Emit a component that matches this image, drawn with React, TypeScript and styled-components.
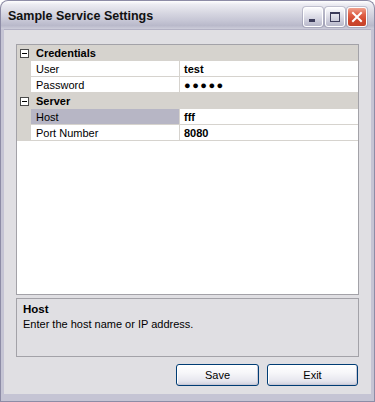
import React from "react";
import styled, { createGlobalStyle } from "styled-components";

const GlobalStyle = createGlobalStyle`
  html, body { margin: 0; padding: 0; background: #ffffff; }
  #root { width: 375px; height: 402px; }
  * { box-sizing: border-box; }
`;

const Window = styled.div`
  width: 375px;
  height: 402px;
  display: flex;
  flex-direction: column;
  font-family: "Liberation Sans", Arial, sans-serif;
  font-size: 11px;
  color: #000;
`;

const TitleBar = styled.div`
  height: 29px;
  flex: none;
  display: flex;
  align-items: center;
  justify-content: space-between;
  padding: 0 7px 0 7px;
  border: 1px solid #8d8ca6;
  border-bottom: none;
  border-radius: 8px 8px 0 0;
  background: linear-gradient(
    180deg,
    #ffffff 0%,
    #ececf2 12%,
    #d9d9e3 40%,
    #c6c6d5 70%,
    #b9b9ca 88%,
    #cdcdda 100%
  );
`;

const Title = styled.span`
  font-family: "Liberation Sans", Arial, sans-serif;
  font-weight: bold;
  font-size: 12.5px;
  color: #111;
  margin-top: 1px;
`;

const Controls = styled.div`
  display: flex;
  gap: 2px;
  margin-top: 3px;
`;

const CtrlButton = styled.div<{ $close?: boolean }>`
  width: 20px;
  height: 20px;
  border: 1px solid #ffffff;
  border-radius: 3px;
  display: flex;
  align-items: center;
  justify-content: center;
  box-shadow: 0 0 0 1px rgba(120, 120, 150, 0.35);
  background: ${(p) =>
    p.$close
      ? "linear-gradient(180deg, #f0a28e 0%, #e0634a 35%, #d0452b 70%, #c4442c 100%)"
      : "linear-gradient(180deg, #fbfbfd 0%, #dedee8 45%, #c6c6d6 80%, #b8b8ca 100%)"};
`;

const Frame = styled.div`
  flex: 1;
  display: flex;
  background: #c5c4d4;
  border: 1px solid #8d8ca6;
  border-top: none;
  padding: 0 3px 7px 3px;
`;

const Client = styled.div`
  flex: 1;
  display: flex;
  flex-direction: column;
  background: #e0dfe3;
  border-top: 1px solid #b3b2c4;
  padding: 14px 12px 8px 12px;
`;

const Grid = styled.div`
  height: 251px;
  flex: none;
  background: #ffffff;
  border: 1px solid #a3a2a8;
  display: flex;
  flex-direction: column;
`;

const CategoryRow = styled.div`
  height: 16px;
  flex: none;
  display: flex;
  align-items: center;
  background: #d6d3ce;
  font-weight: bold;
`;

const Expander = styled.div`
  width: 9px;
  height: 9px;
  margin: 0 7px 0 3px;
  border: 1px solid #4a4a4a;
  background: #ffffff;
  display: flex;
  align-items: center;
  justify-content: center;
  &::after {
    content: "";
    width: 5px;
    height: 1px;
    background: #000;
  }
`;

const PropRow = styled.div`
  height: 16px;
  flex: none;
  display: flex;
`;

const Margin = styled.div`
  width: 14px;
  flex: none;
  background: #d6d3ce;
`;

const NameCell = styled.div<{ $selected?: boolean }>`
  width: 148px;
  flex: none;
  padding-left: 5px;
  display: flex;
  align-items: center;
  border-bottom: 1px solid #d6d3ce;
  background: ${(p) => (p.$selected ? "#b7b6c5" : "#ffffff")};
  white-space: nowrap;
`;

const ValueCell = styled.div`
  flex: 1;
  padding-left: 4px;
  display: flex;
  align-items: center;
  border-left: 1px solid #d6d3ce;
  border-bottom: 1px solid #d6d3ce;
  font-weight: bold;
  white-space: nowrap;
`;

const Dots = styled.span`
  letter-spacing: 1.5px;
  font-size: 11px;
`;

const Description = styled.div`
  height: 59px;
  flex: none;
  margin-top: 3px;
  border: 1px solid #a3a2a8;
  padding: 4px 6px;
  display: flex;
  flex-direction: column;
  line-height: 13px;
`;

const DescTitle = styled.div`
  font-weight: bold;
  font-size: 11.5px;
`;

const DescText = styled.div`
  margin-top: 2px;
`;

const ButtonRow = styled.div`
  margin-top: 7px;
  display: flex;
  justify-content: flex-end;
  gap: 8px;
  padding-right: 1px;
`;

const Button = styled.button<{ $width: number }>`
  width: ${(p) => p.$width}px;
  height: 22px;
  border: 1px solid #003c74;
  border-radius: 3px;
  font-family: "Liberation Sans", Arial, sans-serif;
  font-size: 11px;
  color: #000;
  padding: 0;
  background: linear-gradient(180deg, #ffffff 0%, #f6f6f9 40%, #e6e6ee 80%, #cfcfdc 100%);
  box-shadow: inset -1px -1px 0 #c8c8d6, inset 1px 1px 0 #ffffff;
`;

type Prop = { name: string; value: React.ReactNode; selected?: boolean };
type Category = { title: string; props: Prop[] };

const data: Category[] = [
  {
    title: "Credentials",
    props: [
      { name: "User", value: "test" },
      { name: "Password", value: <Dots>●●●●●</Dots> },
    ],
  },
  {
    title: "Server",
    props: [
      { name: "Host", value: "fff", selected: true },
      { name: "Port Number", value: "8080" },
    ],
  },
];

export default function App() {
  return (
    <>
      <GlobalStyle />
      <Window>
        <TitleBar>
          <Title>Sample Service Settings</Title>
          <Controls>
            <CtrlButton>
              <svg width="14" height="14" viewBox="0 0 14 14">
                <rect x="3" y="9" width="6" height="3" fill="#3c3c5a" />
              </svg>
            </CtrlButton>
            <CtrlButton>
              <svg width="14" height="14" viewBox="0 0 14 14">
                <rect x="2.5" y="2.5" width="9" height="9" fill="none" stroke="#3c3c5a" strokeWidth="1" />
                <rect x="2" y="2" width="10" height="2" fill="#3c3c5a" />
              </svg>
            </CtrlButton>
            <CtrlButton $close>
              <svg width="14" height="14" viewBox="0 0 14 14">
                <path d="M3 3 L11 11 M11 3 L3 11" stroke="#ffffff" strokeWidth="2" strokeLinecap="square" />
              </svg>
            </CtrlButton>
          </Controls>
        </TitleBar>
        <Frame>
          <Client>
            <Grid>
              {data.map((cat) => (
                <React.Fragment key={cat.title}>
                  <CategoryRow>
                    <Expander />
                    {cat.title}
                  </CategoryRow>
                  {cat.props.map((p) => (
                    <PropRow key={p.name}>
                      <Margin />
                      <NameCell $selected={p.selected}>{p.name}</NameCell>
                      <ValueCell>{p.value}</ValueCell>
                    </PropRow>
                  ))}
                </React.Fragment>
              ))}
            </Grid>
            <Description>
              <DescTitle>Host</DescTitle>
              <DescText>Enter the host name or IP address.</DescText>
            </Description>
            <ButtonRow>
              <Button $width={83}>Save</Button>
              <Button $width={91}>Exit</Button>
            </ButtonRow>
          </Client>
        </Frame>
      </Window>
    </>
  );
}
